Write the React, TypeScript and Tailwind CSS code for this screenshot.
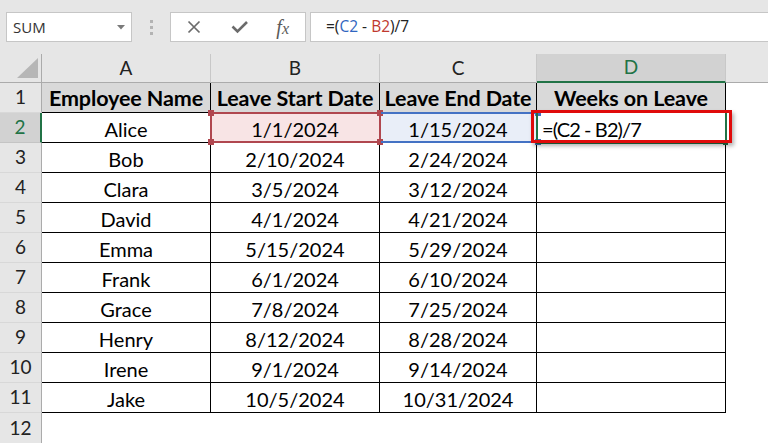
import React from "react";

const rows: [string, string, string][] = [
  ["Alice", "1/1/2024", "1/15/2024"],
  ["Bob", "2/10/2024", "2/24/2024"],
  ["Clara", "3/5/2024", "3/12/2024"],
  ["David", "4/1/2024", "4/21/2024"],
  ["Emma", "5/15/2024", "5/29/2024"],
  ["Frank", "6/1/2024", "6/10/2024"],
  ["Grace", "7/8/2024", "7/25/2024"],
  ["Henry", "8/12/2024", "8/28/2024"],
  ["Irene", "9/1/2024", "9/14/2024"],
  ["Jake", "10/5/2024", "10/31/2024"],
];

function Toolbar() {
  return (
    <div className="flex h-[54px] items-start bg-[#e6e6e6] pl-[6px] pt-[12px] font-['Open_Sans',sans-serif]">
      <div className="flex h-[30px] w-[126px] items-center justify-between border border-[#c6c6c6] bg-white pl-[6px] pr-[6px]">
        <span className="text-[15px] text-[#333]">SUM</span>
        <svg width="8" height="5" viewBox="0 0 8 5">
          <polygon points="0,0 8,0 4,4.5" fill="#7a7a7a" />
        </svg>
      </div>
      <div className="flex h-[30px] w-[38px] flex-col items-center justify-center gap-[3px]">
        <div className="h-[3px] w-[3px] bg-[#b3b3b3]" />
        <div className="h-[3px] w-[3px] bg-[#b3b3b3]" />
        <div className="h-[3px] w-[3px] bg-[#b3b3b3]" />
      </div>
      <div className="flex h-[30px] w-[136px] items-center border border-[#c6c6c6] bg-white">
        <div className="flex w-[45px] justify-center pl-[2px]">
          <svg width="14" height="14" viewBox="0 0 14 14">
            <path d="M1.5 1.5 L12.5 12.5 M12.5 1.5 L1.5 12.5" stroke="#6b6b6b" strokeWidth="1.7" fill="none" />
          </svg>
        </div>
        <div className="flex w-[45px] justify-center pl-[3px]">
          <svg width="18" height="14" viewBox="0 0 18 14">
            <path d="M1.5 6.5 L6.5 11.5 L16 2" stroke="#6b6b6b" strokeWidth="2.6" fill="none" />
          </svg>
        </div>
        <div className="flex w-[45px] justify-center">
          <span className="font-['Liberation_Serif',serif] text-[20px] italic leading-none text-[#5a5a5a]">
            f<span className="text-[16px]">x</span>
          </span>
        </div>
      </div>
      <div className="ml-[4px] flex h-[30px] flex-1 items-center border-y border-l border-[#c6c6c6] bg-white pl-[15px] text-[15.5px] text-[#222]">
        <span>=(</span>
        <span className="text-[#3166c0]">C2</span>
        <span className="whitespace-pre"> - </span>
        <span className="text-[#c0392f]">B2</span>
        <span>)/7</span>
      </div>
    </div>
  );
}

const hdr = "flex items-center justify-center bg-[#e6e6e6] text-[19px] text-[#222] font-['Lato',sans-serif]";

export default function App() {
  return (
    <div className="h-[443px] w-[768px] overflow-hidden bg-white">
      <Toolbar />
      <div className="relative grid grid-cols-[42px_169px_169px_157px_189px_1fr] grid-rows-[29px_repeat(12,30px)] font-['Lato',sans-serif] text-black">
        {/* header row */}
        <div className="relative border-b border-r border-[#ababab] bg-[#e6e6e6]">
          <svg className="absolute left-0 top-0" width="42" height="29" viewBox="0 0 42 29">
            <polygon points="17,24 38,24 38,4" fill="#b6b6b6" />
          </svg>
        </div>
        <div className={`${hdr} border-b border-r border-b-[#ababab] border-r-[#c8c8c8]`}>A</div>
        <div className={`${hdr} border-b border-r border-b-[#ababab] border-r-[#c8c8c8]`}>B</div>
        <div className={`${hdr} border-b border-r border-b-[#ababab] border-r-[#c8c8c8]`}>C</div>
        <div className="flex items-center justify-center border-b-2 border-r border-b-[#217346] border-r-[#c8c8c8] bg-[#d2d2d2] font-['Lato',sans-serif] text-[19px] text-[#217346]">
          D
        </div>
        <div className="border-b border-[#ababab] bg-[#e6e6e6]" />

        {/* row 1 */}
        <div className={`${hdr} border-b border-r border-b-[#d8d8d8] border-r-[#ababab]`}>1</div>
        {["Employee Name", "Leave Start Date", "Leave End Date", "Weeks on Leave"].map((t) => (
          <div
            key={t}
            className="flex items-center justify-center whitespace-nowrap border-b border-r border-black bg-[#d9d9d9] pt-[1px] text-[21.5px] font-bold tracking-[-0.1px]"
          >
            {t}
          </div>
        ))}
        <div />

        {rows.map((r, i) => {
          const n = i + 2;
          const sel = n === 2;
          return (
            <React.Fragment key={n}>
              <div
                className={
                  sel
                    ? "flex items-center justify-center border-b border-r-2 border-b-[#c4c4c4] border-r-[#217346] bg-[#d2d2d2] text-[19px] text-[#217346]"
                    : `${hdr} border-b border-r border-b-[#d8d8d8] border-r-[#ababab]`
                }
              >
                {n}
              </div>
              <div className="flex items-center justify-center border-b border-r border-black pt-[2px] text-[20px]">{r[0]}</div>
              <div
                className={`flex items-center justify-center border-b border-r border-black pt-[2px] text-[20px] ${sel ? "bg-[#f8e4e5]" : ""}`}
              >
                {r[1]}
              </div>
              <div
                className={`flex items-center justify-center border-b border-r border-black pt-[2px] text-[20px] ${sel ? "bg-[#e9eef8]" : ""}`}
              >
                {r[2]}
              </div>
              <div className="flex items-center border-b border-r border-black pl-[5px] pt-[2px] text-[20px] tracking-[-0.9px]">
                {sel ? "=(C2 - B2)/7" : ""}
              </div>
              <div />
            </React.Fragment>
          );
        })}

        {/* row 12 */}
        <div className={`${hdr} border-r border-[#ababab]`}>12</div>
        <div />
        <div />
        <div />
        <div />
        <div />

        {/* B2 reference highlight */}
        <div className="pointer-events-none absolute left-[210px] top-[58px] h-[31px] w-[171px] border-2 border-[#b0474f]">
          <div className="absolute -left-[4px] -top-[4px] h-[6px] w-[6px] bg-[#b0474f]" />
          <div className="absolute -right-[4px] -top-[4px] h-[6px] w-[6px] bg-[#b0474f]" />
          <div className="absolute -bottom-[4px] -left-[4px] h-[6px] w-[6px] bg-[#b0474f]" />
          <div className="absolute -bottom-[4px] -right-[4px] h-[6px] w-[6px] bg-[#b0474f]" />
        </div>
        {/* C2 reference highlight */}
        <div className="pointer-events-none absolute left-[381px] top-[58px] h-[31px] w-[156px] border-y-2 border-[#4472c4]">
          <div className="absolute -right-[4px] -top-[4px] h-[6px] w-[6px] bg-[#4472c4]" />
          <div className="absolute -bottom-[4px] -right-[4px] h-[6px] w-[6px] bg-[#4472c4]" />
        </div>
        {/* active cell D2 */}
        <div className="pointer-events-none absolute left-[536px] top-[57px] h-[33px] w-[191px] border-2 border-[#217346]">
          <div className="absolute -bottom-[3px] -right-[3px] h-[5px] w-[5px] bg-[#217346]" />
        </div>
        {/* red annotation box */}
        <div className="pointer-events-none absolute left-[531px] top-[56px] h-[33px] w-[201px] border-[3px] border-[#e00b0b] shadow-[2px_3px_4px_rgba(0,0,0,0.3)]" />
      </div>
    </div>
  );
}
